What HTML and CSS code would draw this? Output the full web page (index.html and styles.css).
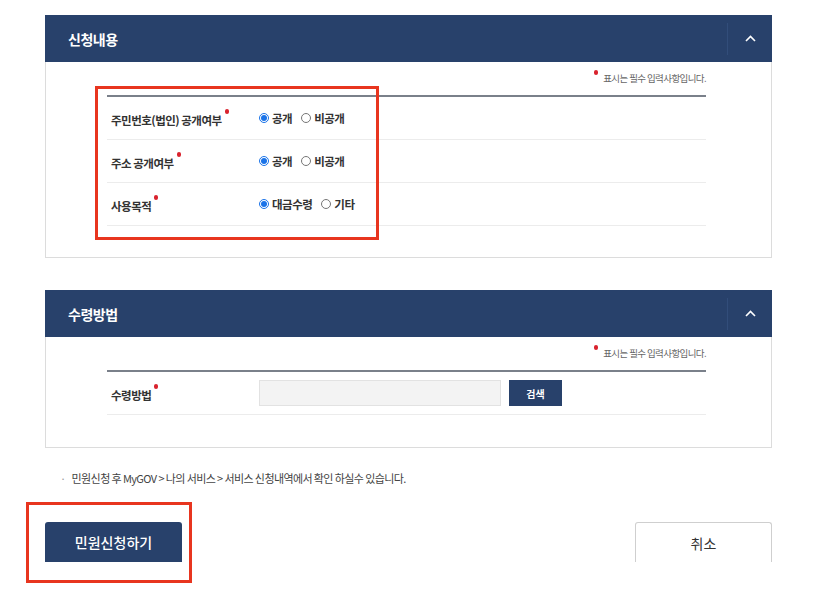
FILE: index.html
```html
<!DOCTYPE html>
<html>
<head>
    <meta charset="utf-8">
    <title>민원신청</title>
    <link rel="stylesheet" href="styles.css">
</head>
<body>
    <div class="container">
        <div class="panel">
            <div class="panel-head">
                <h3 class="panel-title">신청내용</h3>
                <button class="toggle-btn" aria-label="접기">
                    <svg width="11" height="7" viewBox="0 0 11 7"><path d="M1 6 L5.5 1.5 L10 6" fill="none" stroke="#fff" stroke-width="1.6"/></svg>
                </button>
            </div>
            <div class="panel-body body-apply">
                <p class="req-note"><span class="req"></span>표시는 필수 입력사항입니다.</p>
                <div class="form-table">
                    <div class="form-row">
                        <div class="form-label">주민번호(법인) 공개여부<span class="req"></span></div>
                        <div class="form-field">
                            <label class="radio"><input type="radio" name="jumin" checked>공개</label>
                            <label class="radio"><input type="radio" name="jumin">비공개</label>
                        </div>
                    </div>
                    <div class="form-row">
                        <div class="form-label">주소 공개여부<span class="req"></span></div>
                        <div class="form-field">
                            <label class="radio"><input type="radio" name="addr" checked>공개</label>
                            <label class="radio"><input type="radio" name="addr">비공개</label>
                        </div>
                    </div>
                    <div class="form-row">
                        <div class="form-label">사용목적<span class="req"></span></div>
                        <div class="form-field">
                            <label class="radio"><input type="radio" name="purpose" checked>대금수령</label>
                            <label class="radio"><input type="radio" name="purpose">기타</label>
                        </div>
                    </div>
                </div>
            </div>
        </div>

        <div class="panel panel-receive">
            <div class="panel-head">
                <h3 class="panel-title">수령방법</h3>
                <button class="toggle-btn" aria-label="접기">
                    <svg width="11" height="7" viewBox="0 0 11 7"><path d="M1 6 L5.5 1.5 L10 6" fill="none" stroke="#fff" stroke-width="1.6"/></svg>
                </button>
            </div>
            <div class="panel-body body-receive">
                <p class="req-note"><span class="req"></span>표시는 필수 입력사항입니다.</p>
                <div class="form-table">
                    <div class="form-row">
                        <div class="form-label">수령방법<span class="req"></span></div>
                        <div class="form-field">
                            <input type="text" class="text-input" readonly>
                            <button class="search-btn">검색</button>
                        </div>
                    </div>
                </div>
            </div>
        </div>

        <p class="guide">민원신청 후 MyGOV &gt; 나의 서비스 &gt; 서비스 신청내역에서 확인 하실수 있습니다.</p>

        <div class="actions">
            <button class="btn btn-primary">민원신청하기</button>
            <button class="btn btn-cancel">취소</button>
        </div>
    </div>

    <div class="mark mark-form"></div>
    <div class="mark mark-submit"></div>
</body>
</html>
```

FILE: styles.css
```css
body {
    font-family: "Noto Sans CJK KR", "Noto Sans", sans-serif;
    margin: 0;
    background-color: #fff;
    color: #222;
}
.container {
    width: 727px;
    margin-left: 45px;
    padding-top: 15px;
}
.panel {
    border: 1px solid #dcdcdc;
    border-top: none;
}
.panel-receive {
    margin-top: 32px;
}
.panel-head {
    display: flex;
    align-items: center;
    justify-content: space-between;
    height: 47px;
    margin: 0 -1px;
    background-color: #28416b;
}
.panel-title {
    margin: 0;
    padding-left: 23px;
    color: #fff;
    font-size: 14px;
    font-weight: bold;
    letter-spacing: -0.5px;
}
.toggle-btn {
    display: flex;
    align-items: center;
    justify-content: center;
    width: 45px;
    height: 32px;
    padding: 0;
    border: none;
    border-left: 1px solid #324d7a;
    background: transparent;
}
.panel-body {
    padding: 8px 65px 0 61px;
}
.body-apply {
    height: 187px;
}
.body-receive {
    height: 102px;
}
.req-note {
    margin: 0 0 9px;
    text-align: right;
    font-size: 9.5px;
    line-height: 16px;
    color: #666;
    letter-spacing: -0.6px;
}
.req {
    display: inline-block;
    width: 4px;
    height: 5px;
    margin: 0 4px 0 3px;
    border-radius: 2px;
    background-color: #d9232e;
    vertical-align: 11px;
}
.req-note .req {
    margin: 0 5px 0 0;
    vertical-align: 7px;
}
.form-table {
    border-top: 2px solid #7a808a;
}
.form-row {
    display: flex;
    align-items: center;
    height: 42px;
    border-bottom: 1px solid #ececec;
}
.form-label {
    width: 148px;
    padding-left: 4px;
    font-size: 11.5px;
    font-weight: bold;
    color: #333;
    letter-spacing: -0.5px;
}
.form-field {
    display: flex;
    align-items: center;
    gap: 9px;
}
.radio {
    display: flex;
    align-items: center;
    font-size: 11.5px;
    font-weight: bold;
    color: #333;
    letter-spacing: -0.5px;
}
.radio input {
    width: 10px;
    height: 10px;
    margin: 0 3px 0 0;
    accent-color: #1a73e8;
}
.text-input {
    width: 240px;
    height: 24px;
    padding: 0;
    border: 1px solid #e2e2e2;
    background-color: #f3f3f3;
}
.search-btn {
    width: 53px;
    height: 26px;
    margin-left: -1px;
    border: none;
    background-color: #28416b;
    color: #fff;
    font-family: inherit;
    font-size: 10px;
    font-weight: bold;
}
.guide {
    margin: 23px 0 0 15px;
    font-size: 11px;
    color: #444;
    letter-spacing: -0.6px;
    line-height: 14px;
}
.guide::before {
    content: "·";
    margin-right: 6px;
    color: #999;
}
.actions {
    display: flex;
    justify-content: space-between;
    margin-top: 37px;
}
.btn {
    width: 137px;
    height: 40px;
    font-family: inherit;
    font-size: 14px;
    border-radius: 3px 3px 0 0;
}
.btn-primary {
    border: none;
    background-color: #28416b;
    color: #fff;
    font-weight: 500;
}
.btn-cancel {
    border: 1px solid #cfcfcf;
    border-bottom: none;
    background-color: #fff;
    color: #333;
}
.mark {
    position: absolute;
    border: 3px solid #e8351f;
}
.mark-form {
    left: 95px;
    top: 86px;
    width: 278px;
    height: 148px;
}
.mark-submit {
    left: 26px;
    top: 502px;
    width: 160px;
    height: 75px;
}
```
